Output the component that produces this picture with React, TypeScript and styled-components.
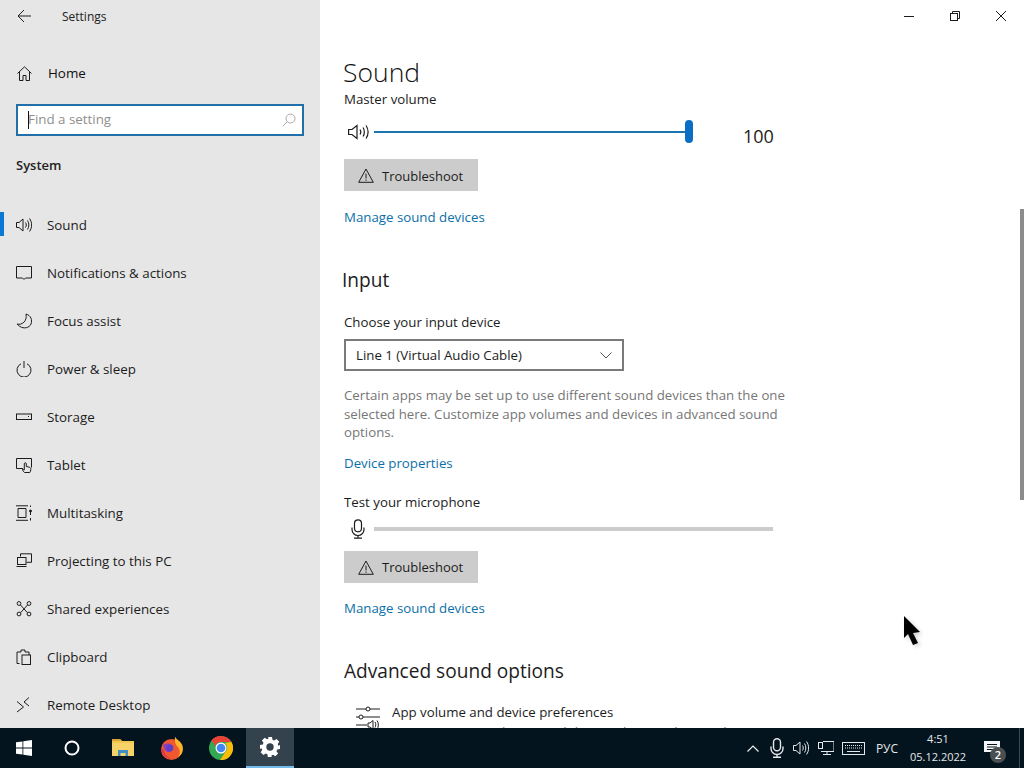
import React from 'react';
import styled, { createGlobalStyle } from 'styled-components';

const Global = createGlobalStyle`
  html, body { margin: 0; padding: 0; background: #fff; }
  * { box-sizing: border-box; }
  body { font-family: "Open Sans", "Noto Sans", "Liberation Sans", sans-serif; color: #111; overflow: hidden; }
`;

const Screen = styled.div`
  position: relative;
  width: 1024px;
  height: 768px;
  display: flex;
  flex-direction: column;
  overflow: hidden;
`;
const Win = styled.div`
  flex: 0 0 728px;
  display: flex;
  min-height: 0;
`;

/* Sidebar */
const Side = styled.aside`
  flex: 0 0 320px;
  background: #e6e6e6;
  overflow: hidden;
`;
const TitleBar = styled.div`
  height: 32px;
  display: flex;
  align-items: center;
  padding-left: 16px;
  font-size: 12px;
  color: #222;
`;
const AppTitle = styled.span`
  margin-left: 30px;
`;
const HomeRow = styled.div`
  margin-top: 17px;
  height: 48px;
  display: flex;
  align-items: center;
  padding-left: 17px;
  gap: 16px;
  font-size: 13.4px;
`;
const Search = styled.div`
  margin: 7px 0 0 16px;
  width: 288px;
  height: 32px;
  background: #fff;
  border: 2px solid #2270a8;
  display: flex;
  align-items: center;
  padding: 0 6px 0 10px;
  font-size: 13.35px;
  color: #8f8f8f;
`;
const Caret = styled.span`
  width: 1px;
  height: 18px;
  background: #111;
  margin-right: -1px;
`;
const SearchText = styled.span`
  flex: 1;
  padding-bottom: 3px;
`;
const GroupTitle = styled.div`
  margin: 19px 0 0 16px;
  line-height: 20px;
  font-size: 13px;
  font-weight: 600;
  color: #222;
`;
const Nav = styled.nav`
  margin-top: 26px;
  display: flex;
  flex-direction: column;
`;
const NavRow = styled.div`
  position: relative;
  height: 48px;
  display: flex;
  align-items: center;
  padding-left: 16px;
  gap: 15px;
  font-size: 13.35px;
  color: #1c1c1c;
`;
const NavLabel = styled.span`
  display: block;
`;
const ActiveMark = styled.span`
  position: absolute;
  left: 0;
  top: 11px;
  width: 4px;
  height: 24px;
  background: #0a78d4;
`;

/* Main */
const Main = styled.main`
  position: relative;
  flex: 1;
  display: flex;
  flex-direction: column;
  min-width: 0;
  background: #fff;
`;
const WinControls = styled.div`
  height: 32px;
  display: flex;
  justify-content: flex-end;
  flex: 0 0 32px;
`;
const WinBtn = styled.div`
  width: 46px;
  height: 32px;
  display: flex;
  align-items: center;
  justify-content: center;
`;
const PageTitle = styled.h1`
  margin: 22px 0 0 23px;
  font-size: 26.5px;
  line-height: 36px;
  font-weight: 300;
  color: #111;
  flex: 0 0 36px;
  height: 36px;
`;
const Scroll = styled.div`
  margin-top: 4px;
  flex: 1;
  min-height: 0;
  overflow: hidden;
  padding-left: 24px;
`;
const Label = styled.div<{ $mt: number }>`
  margin-top: ${p => p.$mt}px;
  font-size: 13.27px;
  line-height: 20px;
  color: #1c1c1c;
`;
const SliderRow = styled.div<{ $mt: number }>`
  margin-top: ${p => p.$mt}px;
  display: flex;
  height: 24px;
  align-items: center;
`;
const SliderIcon = styled.div`
  width: 30px;
  display: flex;
  justify-content: center;
  padding-right: 2px;
`;
const Track = styled.div<{ $w: number; $c: string; $h: number }>`
  position: relative;
  width: ${p => p.$w}px;
  height: ${p => p.$h}px;
  background: ${p => p.$c};
`;
const Thumb = styled.span`
  position: absolute;
  right: -4px;
  top: -11px;
  width: 8px;
  height: 23px;
  border-radius: 4px;
  background: #0a6fc4;
`;
const Value = styled.span`
  margin: 8px 0 0 54px;
  font-size: 18px;
  line-height: 24px;
  color: #222;
  width: 40px;
`;
const TroubleBtn = styled.div<{ $mt: number }>`
  margin-top: ${p => p.$mt}px;
  width: 134px;
  height: 32px;
  background: #cccccc;
  display: flex;
  align-items: center;
  padding: 1px 0 0 14px;
  gap: 8px;
  font-size: 13px;
  color: #1c1c1c;
`;
const LinkText = styled.div<{ $mt: number }>`
  margin-top: ${p => p.$mt}px;
  font-size: 13.27px;
  line-height: 20px;
  color: #0b6fa8;
`;
const Heading = styled.h2<{ $mt: number; $ml?: number }>`
  margin: ${p => p.$mt}px 0 0 ${p => p.$ml ?? 0}px;
  font-size: 19.1px;
  line-height: 28px;
  font-weight: 400;
  color: #1c1c1c;
`;
const Select = styled.div`
  margin-top: 7px;
  width: 280px;
  height: 32px;
  border: 2px solid #7a7a7a;
  display: flex;
  align-items: center;
  justify-content: space-between;
  padding: 0 10px;
  font-size: 13.27px;
  color: #1c1c1c;
`;
const Help = styled.p`
  margin: 15px 0 0;
  width: 445px;
  font-size: 13.27px;
  line-height: 18.5px;
  color: #767676;
`;
const OptionRow = styled.div`
  margin-top: 17px;
  display: flex;
  padding-left: 12px;
  gap: 12px;
`;
const OptionText = styled.div`
  font-size: 13.27px;
  line-height: 20px;
  color: #1c1c1c;
`;
const OptionSub = styled.div`
  color: #767676;
  white-space: nowrap;
`;
const ScrollThumb = styled.div`
  position: absolute;
  right: 0;
  top: 209px;
  width: 4px;
  height: 291px;
  background: #8c8c8c;
`;

/* Taskbar */
const Taskbar = styled.footer`
  flex: 0 0 40px;
  height: 40px;
  background: #04141f;
  display: flex;
  align-items: stretch;
`;
const Tile = styled.div<{ $active?: boolean; $ml?: number }>`
  width: 48px;
  margin-left: ${p => p.$ml ?? 0}px;
  display: flex;
  align-items: center;
  justify-content: center;
  background: ${p => (p.$active ? '#33424d' : 'transparent')};
  border-bottom: ${p => (p.$active ? '2px solid #76b9ed' : '0')};
`;
const Tray = styled.div`
  margin-left: auto;
  display: flex;
  align-items: stretch;
  padding-right: 5px;
  color: #e4e8ea;
  font-size: 12px;
`;
const TrayItem = styled.div<{ $w: number }>`
  position: relative;
  width: ${p => p.$w}px;
  display: flex;
  align-items: center;
  justify-content: center;
`;
const ChevronItem = styled(TrayItem)`
  padding-right: 2px;
`;
const LangItem = styled(TrayItem)`
  padding-right: 2px;
`;
const MicItem = styled(TrayItem)`
  padding-right: 2px;
`;
const NotifyItem = styled(TrayItem)`
  padding-right: 4px;
`;
const Clock = styled.div`
  display: flex;
  flex-direction: column;
  align-items: center;
  line-height: 18px;
  font-size: 11px;
  white-space: nowrap;
`;
const Badge = styled.span`
  position: absolute;
  left: 21px;
  top: 19px;
  width: 16px;
  height: 16px;
  border-radius: 50%;
  background: #4a4f52;
  color: #fff;
  font-size: 11px;
  font-weight: 600;
  line-height: 16px;
  text-align: center;
`;
const Divider = styled.span`
  position: absolute;
  right: 4px;
  bottom: 0;
  width: 1px;
  height: 40px;
  background: #3a4852;
`;
const Cursor = styled.svg`
  position: absolute;
  left: 896px;
  top: 608px;
  overflow: visible;
`;

const Ic: React.FC<{ children: React.ReactNode; w?: number; h?: number; sw?: number; c?: string }> = ({
  children, w = 16, h = 16, sw = 1, c = '#1c1c1c',
}) => (
  <svg width={w} height={h} viewBox={`0 0 ${w} ${h}`} fill="none" stroke={c} strokeWidth={sw} style={{ flex: 'none', display: 'block' }}>
    {children}
  </svg>
);

const Speaker = ({ c = '#1c1c1c' }: { c?: string }) => (
  <Ic c={c} w={16} h={16}>
    <path d="M.5 5.500h2.500L7 2v12l-4-3.500H.5z" />
    <path d="M9.500 5.500c1 1.500 1 3.500 0 5M11.500 3.500c1.800 2.500 1.800 6.500 0 9M13.500 1.500c2.800 3.800 2.800 9.200 0 13" />
  </Ic>
);
const BigSpeaker = () => (
  <Ic w={21} h={16} sw={1.2}>
    <path d="M.6 5.500h3.400L9 1.500v13l-5-4H.6z" />
    <path d="M12 5.500c1 1.500 1 3.500 0 5M15 3.500c1.800 2.500 1.800 6.500 0 9M18 1.500c2.800 3.800 2.800 9.200 0 13" />
  </Ic>
);
const Warn = () => (
  <Ic w={16} h={15}>
    <path d="M8 1L15.300 14.300H.7z" />
    <path d="M8 5.500v5M8 11.500v1.300" />
  </Ic>
);
const Mic = ({ c = '#1c1c1c', sw = 1.2 }: { c?: string; sw?: number }) => (
  <Ic w={14} h={20} c={c} sw={sw}>
    <rect x="3.500" y=".8" width="7" height="12" rx="3.500" />
    <path d="M1 8.500v2a6 6 0 0 0 12 0v-2M7 16.500v2.500M3 19.200h8" />
  </Ic>
);

const navIcons: Record<string, React.ReactNode> = {
  Sound: <Speaker />,
  'Notifications & actions': (
    <Ic><path d="M.5 1.500h15v11.500h-6L8 14.500 6.500 13h-6z" /></Ic>
  ),
  'Focus assist': (
    <Ic><path d="M10 1c5 1.500 6.500 6 5 10-1.500 4-7.500 5-11 2.500-1-.6-2.500-1.800-3-2.500 5 1.500 10.500-3 9-10z" /></Ic>
  ),
  'Power & sleep': (
    <Ic><path d="M5 2.800a7 7 0 1 0 6 0M8 0v7" /></Ic>
  ),
  Storage: (
    <Ic><rect x=".5" y="5" width="15" height="5.500" /><path d="M12 7.500h1" /></Ic>
  ),
  Tablet: (
    <Ic>
      <path d="M7 11.500H.5V1.500h15v9" />
      <path d="M8.500 15.500c-1-1-2-2-2-3l1.800.4V6.800a1 1 0 0 1 2 0V9.500l3 .7c1.500.4 1.500 1.300 1.500 2.500 0 1-.5 2-1 2.800z" fill="#e6e6e6" />
    </Ic>
  ),
  Multitasking: (
    <Ic>
      <path d="M0 .8h12M0 15.300h12M2 3.500h8v9H2zM14.500 .5v1.500M14.500 5v5M14.500 13v2.500" />
      <circle cx="14.500" cy="6" r="1" fill="#1c1c1c" />
    </Ic>
  ),
  'Projecting to this PC': (
    <Ic>
      <path d="M4.500 3.500V.8h11v8.500h-5" />
      <rect x="1.500" y="4.500" width="8.500" height="7" />
      <path d="M.5 13.500h10" />
    </Ic>
  ),
  'Shared experiences': (
    <Ic>
      <circle cx="3" cy="2.500" r="1.900" /><circle cx="13" cy="2.500" r="1.900" />
      <circle cx="3" cy="13" r="1.900" /><circle cx="13" cy="13" r="1.900" />
      <path d="M4.500 4l7 7.800M11.500 4l-7 7.800" />
    </Ic>
  ),
  Clipboard: (
    <Ic>
      <path d="M3.500 14.500H1V3h4V1h4v2h4v3" />
      <rect x="6" y="6" width="8.500" height="9.500" />
    </Ic>
  ),
  'Remote Desktop': (
    <Ic><path d="M1 4.500L7.500 10 1 15M13 .5L8 5l5 4" /></Ic>
  ),
};
const navItems = Object.keys(navIcons);

const WinLogo = () => (
  <svg width="16" height="16" viewBox="0 0 16 16" fill="#fff">
    <path d="M0 2.300l6.500-.9v6.200H0zM7.300 1.300L16 0v7.600H7.300zM0 8.400h6.500v6.200L0 13.700zM7.300 8.400H16V16l-8.700-1.200z" />
  </svg>
);
const Folder = () => (
  <svg width="22" height="20" viewBox="0 0 22 20">
    <path d="M0 1h8l2 2h12v15H0z" fill="#f2c84f" />
    <path d="M0 1h8l2 2H0z" fill="#d9a436" />
    <path d="M0 5h22v13H0z" fill="#f6d268" />
    <path d="M6 18v-6h10v6z" fill="#3f8fc4" />
    <path d="M8.500 18v-3h5v3z" fill="#f6d268" />
  </svg>
);
const Firefox = () => (
  <svg width="24" height="24" viewBox="0 0 24 24">
    <circle cx="11.500" cy="13.500" r="10.500" fill="#f0582f" />
    <path d="M15 .5c1 3 5 4 7 8 1.800 4 .8 8-1 10-1 1-2 2-3 2.500 3-4 2-8-1-11-1-1.500-2.500-2.500-2-9.500z" fill="#ffb52b" />
    <path d="M3 9c3-2 7-2 9 0 2 2.500 1 6-2 7-2.500.6-5-.8-5.500-3z" fill="#8a3ec0" />
    <circle cx="10" cy="12" r="3.300" fill="#5a3fc8" />
    <path d="M1 13c1 6 6 10 11 10-5-2-8-5-8-10z" fill="#e0344a" />
  </svg>
);
const Chrome = () => (
  <svg width="24" height="24" viewBox="0 0 24 24">
    <circle cx="12" cy="12" r="12" fill="#34a853" />
    <path d="M12 0a12 12 0 0 1 10.400 6H12a6 6 0 0 0-5.700 4L2.500 4.200A12 12 0 0 1 12 0z" fill="#ea4335" />
    <path d="M22.400 6A12 12 0 0 1 11 24l5.700-8.500A6 6 0 0 0 16 7z" fill="#fbbc05" />
    <circle cx="12" cy="12" r="5.500" fill="#fff" />
    <circle cx="12" cy="12" r="4.300" fill="#4285f4" />
  </svg>
);
const Gear = () => (
  <svg width="20" height="20" viewBox="0 0 20 20">
    <path
      fill="#fff"
      fillRule="evenodd"
      d="M8 0h4l.5 2.800 1.700.7 2.300-1.600 2.800 2.800-1.600 2.300.7 1.700L20 8v4l-2.800.5-.7 1.700 1.600 2.300-2.800 2.800-2.300-1.600-1.700.7L11.800 20h-4l-.4-2.800-1.700-.7-2.300 1.600-2.800-2.800 1.600-2.300-.7-1.700L0 12V8l2.800-.5.700-1.700-1.600-2.300 2.800-2.800 2.300 1.600 1.700-.7zM10 6.300a3.700 3.700 0 1 0 0 7.400 3.700 3.700 0 0 0 0-7.400z"
    />
  </svg>
);

export default function App() {
  return (
    <Screen>
      <Global />
      <Win>
        <Side>
          <TitleBar>
            <Ic w={16} h={16} c="#222">
              <path d="M15 8H2M8 2L2 8l6 6" />
            </Ic>
            <AppTitle>Settings</AppTitle>
          </TitleBar>
          <HomeRow>
            <Ic w={15} h={15}>
              <path d="M.5 7.500L7.500 .8l7 6.700M2.500 6v8.500h3.500V9.500h3v5h3.500V6" />
            </Ic>
            <NavLabel>Home</NavLabel>
          </HomeRow>
          <Search>
            <Caret />
            <SearchText>Find a setting</SearchText>
            <Ic w={14} h={14} c="#a8a8a8">
              <circle cx="8.500" cy="5.500" r="4.500" />
              <path d="M5.200 8.800L.8 13.200" />
            </Ic>
          </Search>
          <GroupTitle>System</GroupTitle>
          <Nav>
            {navItems.map(n => (
              <NavRow key={n}>
                {n === 'Sound' && <ActiveMark />}
                {navIcons[n]}
                <NavLabel>{n}</NavLabel>
              </NavRow>
            ))}
          </Nav>
        </Side>
        <Main>
          <WinControls>
            <WinBtn>
              <Ic w={10} h={10}><path d="M0 5.500h10" /></Ic>
            </WinBtn>
            <WinBtn>
              <Ic w={10} h={10}>
                <rect x=".5" y="2.500" width="7" height="7" />
                <path d="M2.500 2.500v-2h7v7h-2" />
              </Ic>
            </WinBtn>
            <WinBtn>
              <Ic w={10} h={10}><path d="M0 0l10 10M10 0L0 10" /></Ic>
            </WinBtn>
          </WinControls>
          <PageTitle>Sound</PageTitle>
          <Scroll>
            <Label $mt={-5}>Master volume</Label>
            <SliderRow $mt={11}>
              <SliderIcon><BigSpeaker /></SliderIcon>
              <Track $w={315} $c="#1c76ad" $h={2}><Thumb /></Track>
              <Value>100</Value>
            </SliderRow>
            <TroubleBtn $mt={15}><Warn />Troubleshoot</TroubleBtn>
            <LinkText $mt={16}>Manage sound devices</LinkText>
            <Heading $mt={39} $ml={-2}>Input</Heading>
            <Label $mt={18}>Choose your input device</Label>
            <Select>
              Line 1 (Virtual Audio Cable)
              <Ic w={12} h={7} c="#555"><path d="M.5 .5L6 6l5.500-5.500" /></Ic>
            </Select>
            <Help>
              Certain apps may be set up to use different sound devices than the one selected here. Customize app volumes and devices in advanced sound options.
            </Help>
            <LinkText $mt={11}>Device properties</LinkText>
            <Label $mt={19}>Test your microphone</Label>
            <SliderRow $mt={5}>
              <SliderIcon><Mic /></SliderIcon>
              <Track $w={399} $c="#cccccc" $h={4} />
            </SliderRow>
            <TroubleBtn $mt={10}><Warn />Troubleshoot</TroubleBtn>
            <LinkText $mt={15}>Manage sound devices</LinkText>
            <Heading $mt={39}>Advanced sound options</Heading>
            <OptionRow>
              <Ic w={24} h={28} c="#1c1c1c">
                <path d="M0 7h10M14 7h10M0 15h3M7 15h17M0 23h11" />
                <circle cx="12" cy="7" r="2" />
                <circle cx="5" cy="15" r="2" />
                <path d="M12 21h2l3-2.500v9L14 25h-2zM19 20c1 1.500 1 4 0 5.500M21 18.500c1.800 2.500 1.800 6.500 0 9" />
              </Ic>
              <OptionText>
                App volume and device preferences
                <OptionSub>Customize app volumes and the speakers or devices they use.</OptionSub>
              </OptionText>
            </OptionRow>
          </Scroll>
          <ScrollThumb />
        </Main>
      </Win>
      <Taskbar>
        <Tile><WinLogo /></Tile>
        <Tile>
          <svg width="16" height="16" viewBox="0 0 16 16" fill="none" stroke="#fff" strokeWidth="2">
            <circle cx="8" cy="8" r="6.500" />
          </svg>
        </Tile>
        <Tile $ml={3}><Folder /></Tile>
        <Tile $ml={1}><Firefox /></Tile>
        <Tile $ml={1}><Chrome /></Tile>
        <Tile $ml={1} $active><Gear /></Tile>
        <Tray>
          <ChevronItem $w={24}>
            <Ic w={12} h={7} c="#eef1f2" sw={1.2}><path d="M.5 6.500L6 1l5.500 5.500" /></Ic>
          </ChevronItem>
          <MicItem $w={23}><Mic c="#e4e8ea" sw={1.4} /></MicItem>
          <TrayItem $w={24}><Speaker c="#e4e8ea" /></TrayItem>
          <TrayItem $w={25}>
            <Ic w={16} h={16} c="#e4e8ea">
              <path d="M5 1.500h11v10H3M9 11.500v3M5 14.500h8" />
              <rect x=".5" y="2.500" width="4" height="6" />
            </Ic>
          </TrayItem>
          <TrayItem $w={31}>
            <Ic w={23} h={13} c="#e4e8ea">
              <rect x=".5" y=".5" width="22" height="12" />
              <path d="M3 3.500h17M3 6h17" strokeDasharray="1 1" />
              <path d="M5 9.500h13" />
            </Ic>
          </TrayItem>
          <LangItem $w={38}>РУС</LangItem>
          <TrayItem $w={62}>
            <Clock>
              <span>4:51</span>
              <span>05.12.2022</span>
            </Clock>
          </TrayItem>
          <NotifyItem $w={50}>
            <svg width="16" height="15" viewBox="0 0 16 15" fill="#f4f6f7">
              <path fillRule="evenodd" d="M0 0h16v11H10l-2.500 3V11H0zM3 3v1h10V3zM3 5.500v1h10v-1zM3 8v1h7V8z" />
            </svg>
            <Badge>2</Badge>
          </NotifyItem>
          <Divider />
        </Tray>
      </Taskbar>
      <Cursor width="24" height="40" viewBox="0 0 24 40">
        <path d="M10 10l16 16-7 1 5 10-5 2-5-11-4 4z" fill="#777" opacity=".35" style={{ filter: 'blur(2px)' }} />
        <path d="M8 8l16 16-7 1 5 10-5 2-5-11-4 4z" fill="#000" />
      </Cursor>
    </Screen>
  );
}
